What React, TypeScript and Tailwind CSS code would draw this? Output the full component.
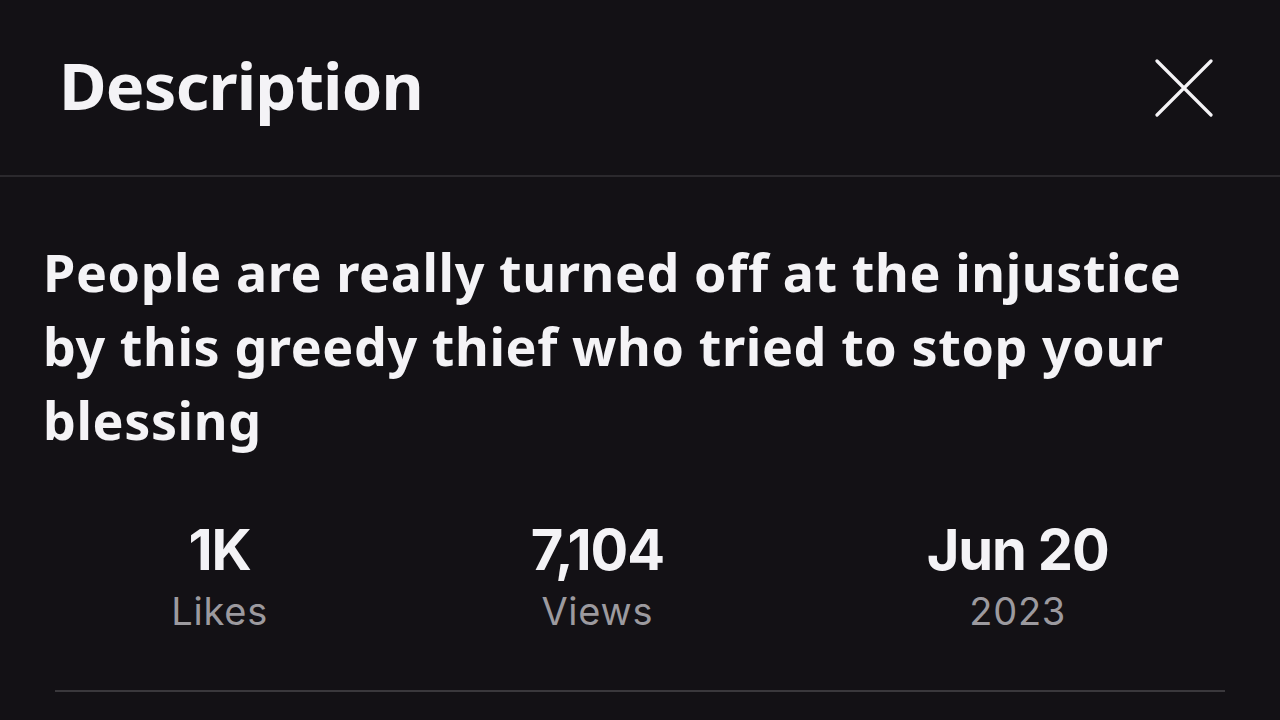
import React from "react";

function Stat({ value, label }: { value: string; label: string }) {
  return (
    <div className="flex flex-col items-center">
      <div className="text-[56px] leading-none font-bold tracking-[-0.02em] text-[#f4f3f6]" style={{ fontFamily: "Inter, 'Noto Sans', sans-serif" }}>
        {value}
      </div>
      <div className="mt-[14px] text-[38px] leading-none tracking-[0.02em] text-[#9c9a9f]" style={{ fontFamily: "Inter, 'Noto Sans', sans-serif" }}>
        {label}
      </div>
    </div>
  );
}

export default function App() {
  return (
    <div className="w-[1280px] h-[720px] overflow-hidden bg-[#131115] text-[#f4f3f6] font-['Noto_Sans',sans-serif]">
      <div className="h-[177px] flex items-center justify-between pl-[59px] pr-[67px] border-b-2 border-[#2b292d]">
        <h1 className="text-[65px] leading-none font-bold tracking-[-0.012em] pb-1">Description</h1>
        <svg width="58" height="58" viewBox="0 0 58 58" fill="none">
          <path d="M2 2L56 56M56 2L2 56" stroke="#f4f3f6" strokeWidth="3.2" strokeLinecap="round" />
        </svg>
      </div>
      <p className="mt-[58px] pl-[43px] pr-[30px] text-[52px] leading-[74px] font-bold tracking-[0.6px]">
        People are really turned off at the injustice
        <br />
        by this greedy thief who tried to stop your
        <br />
        blessing
      </p>
      <div className="mt-[65px] px-[40px] flex justify-around">
        <Stat value="1K" label="Likes" />
        <Stat value="7,104" label="Views" />
        <Stat value="Jun 20" label="2023" />
      </div>
      <div className="mt-[60px] mx-[55px] h-[2px] bg-[#3a383c]" />
    </div>
  );
}
